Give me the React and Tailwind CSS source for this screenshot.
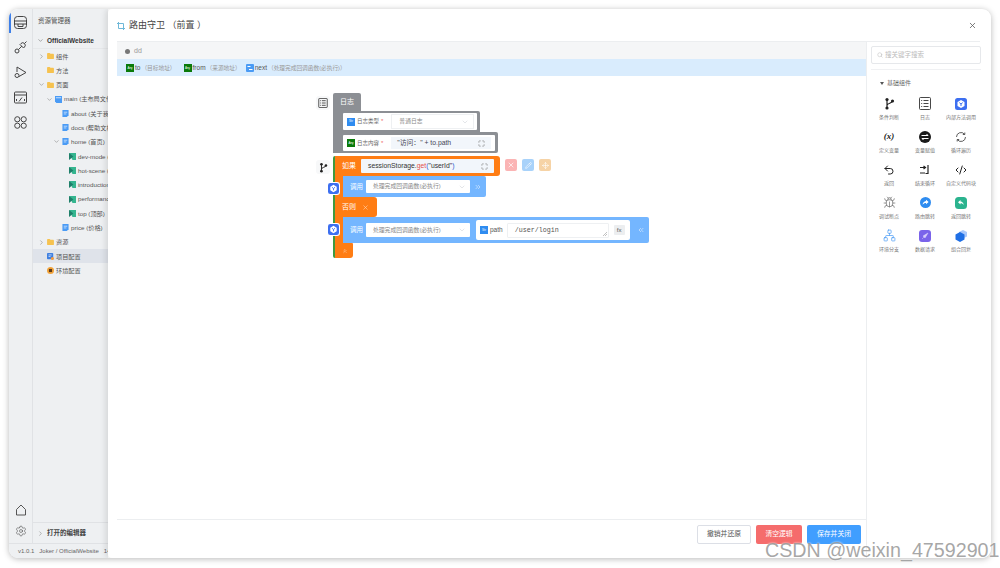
import React from "react";
import { ChevronRight, ChevronDown, Settings, X, Search, Maximize, Undo2, Code2, Bug, Network, ChevronsRight, ChevronsLeft, ChevronsUp, Pencil, Move } from "lucide-react";

const Folder = () => (
  <svg width="7" height="6" viewBox="0 0 8 7" className="shrink-0"><path d="M0 1a1 1 0 0 1 1-1h2l1 1h3a1 1 0 0 1 1 1v4a1 1 0 0 1-1 1H1a1 1 0 0 1-1-1z" fill="#f6c24f" /></svg>
);
const Page = ({ c = "#4a9bf5" }) => (
  <svg width="7" height="7" viewBox="0 0 7 8" className="shrink-0"><path d="M0 0h7v6L5 8H0z" fill={c} /><path d="M1.5 2.5h4M1.5 4.5h3" stroke="#fff" strokeWidth=".7" /></svg>
);
const Arrow = () => (
  <svg width="7" height="7" viewBox="0 0 8 8" className="shrink-0"><path d="M0 0h8v8H4z" fill="#35b58f" /><path d="M0 0l5 4-5 4z" fill="#1f7f6a" /></svg>
);
const MainIc = () => (
  <svg width="7" height="7" viewBox="0 0 8 8" className="shrink-0"><path d="M0 0h8v8H1.5L0 6z" fill="#4a9bf5" /><path d="M1 2h6" stroke="#fff" strokeWidth=".8" /></svg>
);
const Cfg = () => (
  <svg width="7" height="7" viewBox="0 0 9 9" className="shrink-0"><rect width="8" height="8" rx="1" fill="#3f7fe0" /><path d="M2 2.5h4M2 4.5h2.5" stroke="#fff" strokeWidth=".8" /><circle cx="7" cy="7" r="2" fill="#f59a3c" /></svg>
);
const Env = () => (
  <svg width="7" height="7" viewBox="0 0 9 9" className="shrink-0"><circle cx="4.5" cy="4.5" r="4.5" fill="#f2a33a" /><rect x="2.5" y="2.5" width="4" height="4" fill="#5b3a1a" /></svg>
);

const tree = [
  [0, "r", <Folder />, "组件"],
  [0, "", <Folder />, "方法"],
  [0, "d", <Folder />, "页面"],
  [1, "d", <MainIc />, "main (主布局文件)"],
  [2, "", <Page />, "about (关于我们)"],
  [2, "", <Page />, "docs (帮助文档)"],
  [2, "d", <Page />, "home (首页)"],
  [3, "", <Arrow />, "dev-mode (开发模式)"],
  [3, "", <Arrow />, "hot-scene (热门场景)"],
  [3, "", <Arrow />, "introduction (介绍)"],
  [3, "", <Arrow />, "performance (性能)"],
  [3, "", <Arrow />, "top (顶部)"],
  [2, "", <Page />, "price (价格)"],
  [0, "r", <Folder />, "资源"],
  [0, "", <Cfg />, "项目配置", true],
  [0, "", <Env />, "环境配置"],
];

const indent = ["pl-[4px]", "pl-[12px]", "pl-[19px]", "pl-[26px]"];

const Tag = ({ c = "bg-[#0a7a0a]", t = "Any" }) => (
  <span className={`inline-flex items-center justify-center w-[8px] h-[8px] shrink-0 text-[3px] text-white ${c}`}>{t}</span>
);

const Shield = ({ size = 11 }) => (
  <svg width={size} height={size} viewBox="0 0 12 12" className="block"><rect width="12" height="12" rx="2.5" fill="#3d6ff0" /><path d="M6 2l3.5 2v4L6 10 2.5 8V4z" fill="#fff" /><path d="M4.3 4.6L6 6l1.7-1.4M6 6v2" stroke="#3d6ff0" strokeWidth="1" fill="none" /></svg>
);

const palette = [
  ["条件判断", <svg width="11" height="13" viewBox="0 0 11 13"><circle cx="3" cy="2.5" r="1.6" fill="#222" /><circle cx="3" cy="11" r="1.6" fill="#222" /><circle cx="8.5" cy="4" r="1.6" fill="#222" /><path d="M3 2.5v8.5M8.5 4c0 2.5-5.5 2-5.5 4.5" stroke="#222" strokeWidth="1.2" fill="none" /></svg>],
  ["日志", <svg width="12" height="13" viewBox="0 0 12 13" fill="none" stroke="#333" strokeWidth=".9"><rect x=".5" y=".5" width="11" height="12" rx="1" /><path d="M4.5 3.5h5M4.5 6.5h5M4.5 9.5h5M2.2 3.5h1M2.2 6.5h1M2.2 9.5h1" /></svg>],
  ["内部方法调用", <Shield size={12} />],
  ["定义变量", <span className="text-[9px] font-bold text-[#222] leading-none font-['Liberation_Serif',serif] italic">(x)</span>],
  ["变量赋值", <svg width="12" height="12" viewBox="0 0 12 12"><circle cx="6" cy="6" r="6" fill="#1a1a1a" /><path d="M2.5 4.5h6.5l-1.5-1.5M9.5 7.5H3l1.500 1.500" stroke="#fff" strokeWidth="1" fill="none" /></svg>],
  ["循环遍历", <svg width="12" height="12" viewBox="0 0 12 12" fill="none" stroke="#333" strokeWidth=".8"><path d="M1.5 6a4.5 4.5 0 0 1 8-2.8M10.5 6a4.5 4.5 0 0 1-8 2.8" /><path d="M9.8 1.5v2H7.8M2.2 10.5v-2h2" /></svg>],
  ["返回", <Undo2 size={12} color="#222" strokeWidth={2} />],
  ["结束循环", <svg width="12" height="11" viewBox="0 0 12 11" fill="none" stroke="#222" strokeWidth="1.2"><path d="M1 3.5h5M6 9H1M9 1v8.500H6.500" /><path d="M4.500 2l2 1.500-2 1.500" /></svg>],
  ["自定义代码块", <Code2 size={12} color="#222" strokeWidth={2} />],
  ["调试断点", <Bug size={13} color="#555" strokeWidth={1.1} />],
  ["路由跳转", <svg width="11" height="11" viewBox="0 0 11 11"><circle cx="5.5" cy="5.5" r="5.5" fill="#2f8cf0" /><path d="M6 2.7l2.6 2.3L6 7.3V6C4.5 6 3.4 6.5 2.6 7.8 2.8 5.6 4 4.3 6 4z" fill="#fff" /></svg>],
  ["返回跳转", <svg width="12" height="12" viewBox="0 0 12 12"><rect width="12" height="12" rx="3.5" fill="#2bb38e" /><path d="M5.5 3L3 5.3l2.5 2.3V6.3C7 6.3 8 6.8 8.8 8 8.6 6 7.5 4.6 5.5 4.4z" fill="#fff" /></svg>],
  ["环境分支", <Network size={13} color="#4a9bf5" strokeWidth={1.3} />],
  ["数据请求", <svg width="12" height="12" viewBox="0 0 12 12"><rect width="12" height="12" rx="3" fill="#7a63ea" /><path d="M3 9l2-2M4 6l2 2 3-5-5 3z" fill="#d8cffb" stroke="#d8cffb" strokeWidth=".5" /></svg>],
  ["组合回复", <svg width="13" height="12" viewBox="0 0 13 12"><path d="M8 0l4 2v4.500l-4 2-4-2V2z" fill="#a9c8fb" /><path d="M5 2l4.500 2.500v5L5 12 .5 9.500v-5z" fill="#1f6fe5" /></svg>],
];

const Sel = ({ w = "w-[104px]", h = "h-[13px]", children }) => (
  <div className={`flex items-center justify-between bg-white rounded-[1px] pl-[7px] pr-[4px] ${w} ${h}`}>
    <span className="text-[5.8px] text-[#888] whitespace-nowrap">{children}</span>
    <ChevronDown size={8} color="#c0c4cc" strokeWidth={1.3} />
  </div>
);

export default function App() {
  return (
    <div className="relative w-[1000px] h-[568px] overflow-hidden bg-white font-['Liberation_Sans','Noto_Sans_CJK_SC',sans-serif] p-[9px] pb-[10px]">
      <div className="flex h-full rounded-[9px] overflow-hidden shadow-[0_1px_6px_rgba(0,0,0,0.28)]">
        {/* Left column */}
        <div className="w-[99px] shrink-0 flex flex-col bg-[#eef0f2]">
          <div className="flex-1 flex min-h-0">
            <div className="w-[24px] shrink-0 flex flex-col items-center border-r border-[#e0e2e5] relative pt-[7px] pb-[6px] text-[#333]">
              <div className="absolute left-0 top-[4px] w-[1.5px] h-[20px] bg-[#3d7fe8]" />
              <div className="flex flex-col items-center gap-[12px]">
                <svg width="13" height="13" viewBox="0 0 13 13" fill="none" stroke="#444" strokeWidth="1"><rect x=".5" y=".5" width="12" height="12" rx="3" /><path d="M.5 5h12M.5 8h12" /><path d="M4 8v2.500h5V8" /></svg>
                <svg width="13" height="13" viewBox="0 0 13 13" fill="none" stroke="#444" strokeWidth="1"><circle cx="3" cy="10" r="2" /><path d="M4.500 8.500L8 5M6 3.500l3.500 3.500 1-1a2.400 2.400 0 0 0-3.500-3.500zM10.500 2.500l2-2" /></svg>
                <svg width="13" height="13" viewBox="0 0 13 13" fill="none" stroke="#444" strokeWidth="1"><path d="M3 1l9 5.500L5 10.500M3 1v5" /><circle cx="3" cy="9.500" r="2" /></svg>
                <svg width="13" height="13" viewBox="0 0 13 13" fill="none" stroke="#444" strokeWidth="1"><rect x=".5" y="1" width="12" height="11" rx="1" /><path d="M.5 4h12M3 8L2 9l1 1M10 8l1 1-1 1M5 10.500l3-4" /></svg>
                <svg width="13" height="13" viewBox="0 0 13 13" fill="none" stroke="#444" strokeWidth="1"><circle cx="3.300" cy="3.300" r="2.600" /><circle cx="9.700" cy="3.300" r="2.600" /><circle cx="3.300" cy="9.700" r="2.600" /><circle cx="9.700" cy="9.700" r="2.600" /></svg>
              </div>
              <div className="mt-auto flex flex-col items-center gap-[9px]">
                <svg width="12" height="12" viewBox="0 0 12 12" fill="none" stroke="#444" strokeWidth=".9"><path d="M1.500 5.500L6 1l4.500 4.500v5.500h-9z" /></svg>
                <Settings size={12} color="#444" strokeWidth={1.1} />
              </div>
            </div>
            <div className="flex-1 min-w-0 flex flex-col overflow-hidden">
              <div className="h-[22px] shrink-0 flex items-center pl-[5px] pt-[1px] text-[6.5px] text-[#555] whitespace-nowrap">资源管理器</div>
              <div className="h-[16px] shrink-0 flex items-center pl-[4px] gap-[3px] pt-[3px]">
                <ChevronDown size={7} color="#777" />
                <span className="text-[6.5px] font-bold text-[#333] whitespace-nowrap">OfficialWebsite</span>
              </div>
              <div className="mt-[1px] border-t border-[#e6e8ea] flex flex-col">
                {tree.map(([lv, ch, ic, label, active], i) => (
                  <div key={i} className={`h-[14.3px] flex items-center gap-[2px] whitespace-nowrap ${indent[lv]} ${active ? "bg-[#dfe3ea]" : ""}`}>
                    <span className="w-[8px] shrink-0 flex justify-center">
                      {ch === "r" && <ChevronRight size={7} color="#888" />}
                      {ch === "d" && <ChevronDown size={7} color="#888" />}
                    </span>
                    {ic}
                    <span className="text-[6.2px] text-[#555]">{label}</span>
                  </div>
                ))}
              </div>
              <div className="mt-auto h-[21px] border-t border-[#e0e2e5] flex items-center pl-[4px] gap-[3px] whitespace-nowrap">
                <ChevronRight size={7} color="#888" />
                <span className="text-[6.5px] font-bold text-[#444]">打开的编辑器</span>
              </div>
            </div>
          </div>
          <div className="h-[15px] shrink-0 border-t border-[#e0e2e5] flex items-center pl-[9px] gap-[5px] text-[6px] text-[#666] whitespace-nowrap overflow-hidden">
            <span>v1.0.1</span><span>Joker / OfficialWebsite</span><span>14</span>
          </div>
        </div>

        {/* Modal */}
        <div className="flex-1 min-w-0 flex flex-col bg-white rounded-[4px] shadow-[-2px_0_6px_rgba(0,0,0,0.12)] z-10">
          <div className="h-[33px] shrink-0 ml-[9px] mr-[11px] pt-[1px] flex items-center justify-between border-b border-[#eceef0]">
            <div className="flex items-center gap-[4px]">
              <svg width="8" height="8" viewBox="0 0 8 8" fill="none" stroke="#6fb8d8" strokeWidth="1"><path d="M1.500 0v6.500H8M0 1.500h6.500V8" /></svg>
              <span className="text-[9px] text-[#444] whitespace-nowrap">路由守卫 （前置 ）</span>
            </div>
            <X size={9} color="#555" className="mr-[3px]" />
          </div>

          <div className="flex-1 min-h-0 flex pl-[9px]">
            <div className="w-[749px] shrink-0 flex flex-col">
              <div className="h-[17px] shrink-0 bg-[#f5f6f7] flex items-center pl-[8px] pt-[1px] gap-[4px] text-[7px] text-[#999]">
                <span className="w-[5px] h-[5px] rounded-full bg-[#777]" />dd
              </div>
              <div className="h-[17px] shrink-0 bg-[#d9ecfd] flex items-center pl-[9px] pt-[1px] gap-[1px] text-[6.5px] text-[#555] whitespace-nowrap">
                <Tag /><span>to</span><span className="text-[#999] text-[5.7px]">（目标地址）</span>
                <span className="w-[6px]" /><Tag /><span>from</span><span className="text-[#999] text-[5.7px]">（来源地址）</span>
                <span className="w-[3px]" />
                <svg width="8" height="8" viewBox="0 0 8 8"><rect width="8" height="8" rx="1" fill="#4a9bf5" /><path d="M1.500 2.500h3M3 5.500h3.500" stroke="#fff" /></svg>
                <span>next</span><span className="text-[#999] text-[5.7px]">（处理完成回调函数(必执行)）</span>
              </div>

              {/* Canvas */}
              <div className="flex-1 min-h-0 relative">
                <div className="absolute left-[216px] top-[17px] flex flex-col text-[6.5px]">
                  {/* Log block */}
                  <div className="relative flex flex-col">
                    <div className="absolute left-[-17px] top-[3px] w-[14px] h-[14px] rounded-[3px] bg-[#f7f8f9] flex items-center justify-center">
                      <svg width="10" height="10" viewBox="0 0 12 13" fill="none" stroke="#222" strokeWidth="1"><rect x=".5" y=".5" width="11" height="12" rx="1" /><path d="M4.500 3.500h5M4.500 6.500h5M4.500 9.500h5M2.200 3.500h1M2.200 6.500h1M2.200 9.500h1" /></svg>
                    </div>
                    <div className="w-[28px] h-[18px] bg-[#8c8f94] rounded-t-[2px] flex items-center pl-[7px] text-[7px] text-white">日志</div>
                    <div className="flex">
                      <div className="w-[8px] bg-[#8c8f94]" />
                      <div className="flex flex-col">
                        <div className="w-[139px] h-[21px] bg-[#8c8f94] rounded-tr-[2px] pl-[2px] pt-[2px] pr-[3px]">
                          <div className="h-[17px] bg-white rounded-[1px] flex items-center pl-[4px] gap-[2px] whitespace-nowrap">
                            <Tag c="bg-[#2f8cf0]" t="Str" />
                            <span className="text-[5.5px] text-[#666]">日志类型</span><span className="text-[#e66] text-[6px]">*</span>
                            <div className="ml-[6px] border border-[#eef0f2]"><Sel w="w-[81px]">普通日志</Sel></div>
                          </div>
                        </div>
                        <div className="w-[157px] h-[21px] bg-[#8c8f94] rounded-r-[2px] pl-[2px] pt-[3px] pb-[2px] pr-[3px]">
                          <div className="h-full bg-white rounded-[1px] flex items-center pl-[4px] gap-[2px] whitespace-nowrap">
                            <Tag />
                            <span className="text-[5.5px] text-[#666]">日志内容</span><span className="text-[#e66] text-[6px]">*</span>
                            <div className="ml-[6px] w-[100px] h-[12px] bg-[#f2f6fb] flex items-center justify-between px-[6px] text-[6.8px] text-[#445] whitespace-nowrap">
                              <span>"访问：" + to.path</span><Maximize size={7} color="#777" />
                            </div>
                          </div>
                        </div>
                      </div>
                    </div>
                  </div>

                  {/* If block */}
                  <div className="relative flex flex-col mt-[3px] border-l-[2px] border-[#3f9a3f] rounded-l-[2px]">
                    <div className="absolute left-[-19px] top-[4px] w-[14px] h-[14px] rounded-[3px] bg-[#f7f8f9] flex items-center justify-center">
                      <svg width="9" height="11" viewBox="0 0 11 13"><circle cx="3" cy="2.500" r="1.600" fill="#222" /><circle cx="3" cy="11" r="1.600" fill="#222" /><circle cx="8.500" cy="4" r="1.600" fill="#222" /><path d="M3 2.500v8.500M8.500 4c0 2.500-5.500 2-5.500 4.500" stroke="#222" strokeWidth="1.200" fill="none" /></svg>
                    </div>
                    <div className="relative w-[165px] h-[20px] bg-[#ff7d14] rounded-r-[3px] flex items-center pl-[7px] text-white text-[7px]">
                      <span className="w-[19px] shrink-0">如果</span>
                      <div className="w-[133px] h-[14px] bg-[#f2f6fb] flex items-center justify-between pl-[7px] pr-[6px] text-[6.8px] text-[#333] whitespace-nowrap rounded-[1px]">
                        <span>sessionStorage.<span className="text-[#e2504a]">get</span><span className="text-[#2a5ad0]">(</span>"userId"<span className="text-[#2a5ad0]">)</span></span>
                        <Maximize size={7} color="#777" />
                      </div>
                      <div className="absolute left-[170px] top-[3px] flex gap-[5px]">
                        <span className="w-[12px] h-[12px] rounded-[2px] bg-[#fbb4b4] flex items-center justify-center"><X size={8} color="#fff" /></span>
                        <span className="w-[12px] h-[12px] rounded-[2px] bg-[#a8d2fa] flex items-center justify-center"><Pencil size={7} color="#fff" /></span>
                        <span className="w-[12px] h-[12px] rounded-[2px] bg-[#f6d3a6] flex items-center justify-center"><Move size={7} color="#fff" /></span>
                      </div>
                    </div>
                    <div className="flex">
                      <div className="w-[8px] bg-[#ff7d14]" />
                      <div className="relative w-[143px] h-[21px] bg-[#74b6ff] rounded-r-[2px] flex items-center pl-[7px] text-white text-[6.5px]">
                        <div className="absolute left-[-16px] top-[6px] p-[1px] bg-white rounded-[3px]"><Shield /></div>
                        <span className="w-[16px]">调用</span>
                        <Sel>处理完成回调函数(必执行)</Sel>
                        <ChevronsRight size={8} color="#d9ecff" className="ml-[4px]" />
                      </div>
                    </div>
                    <div className="w-[42px] h-[20px] bg-[#ff7d14] rounded-r-[3px] flex items-center pl-[7px] gap-[6px] text-white text-[7px] whitespace-nowrap">
                      否则 <X size={7} color="#ffd9b8" />
                    </div>
                    <div className="flex">
                      <div className="w-[8px] bg-[#ff7d14]" />
                      <div className="relative w-[306px] h-[26px] bg-[#74b6ff] rounded-r-[2px] flex items-center pl-[7px] text-white text-[6.5px]">
                        <div className="absolute left-[-16px] top-[6px] p-[1px] bg-white rounded-[3px]"><Shield /></div>
                        <span className="w-[16px]">调用</span>
                        <Sel h="h-[14px]">处理完成回调函数(必执行)</Sel>
                        <div className="ml-[6px] w-[154px] h-[20px] bg-white rounded-[2px] flex items-center pl-[4px] gap-[2px]">
                          <Tag c="bg-[#2f8cf0]" t="Str" />
                          <span className="text-[6.5px] text-[#555]">path</span>
                          <div className="relative ml-[2px] w-[102px] h-[15px] border border-[#eef0f2] rounded-[1px] flex items-center pl-[7px] font-['Liberation_Mono',monospace] text-[6.7px] text-[#555]">
                            /user/login
                            <svg className="absolute right-[1px] bottom-[1px]" width="4" height="4" viewBox="0 0 4 4" stroke="#999" strokeWidth=".6"><path d="M0 4l4-4M2 4l2-2" /></svg>
                          </div>
                          <span className="ml-[3px] w-[11px] h-[10px] bg-[#eceef0] rounded-[1px] flex items-center justify-center text-[6px] text-[#555]">fx</span>
                        </div>
                        <ChevronsLeft size={8} color="#d9ecff" className="ml-[7px]" />
                      </div>
                    </div>
                    <div className="w-[18px] h-[15px] bg-[#ff7d14] rounded-br-[3px] rounded-tr-[1px] flex items-center pl-[7px]">
                      <ChevronsUp size={6} color="#ffe3c9" />
                    </div>
                  </div>
                </div>
              </div>

              <div className="h-[39px] shrink-0 border-t border-[#eceef0] flex items-start pt-[5px] justify-end pr-[5px] gap-[5px] text-[6.8px] whitespace-nowrap">
                <button className="w-[54px] h-[19px] bg-white border border-[#dcdfe6] rounded-[2px] text-[#555]">撤销并还原</button>
                <button className="w-[46px] h-[19px] bg-[#f56c6c] rounded-[2px] text-white">清空逻辑</button>
                <button className="w-[54px] h-[19px] bg-[#409eff] rounded-[2px] text-white">保存并关闭</button>
              </div>
            </div>

            {/* Palette */}
            <div className="flex-1 min-w-0 border-l border-[#eceef0] flex flex-col pl-[4px] pr-[10px]">
              <div className="h-[28px] shrink-0 pt-[4px] border-b border-[#f0f1f3]">
                <div className="w-full h-[18px] border border-[#e6e8eb] rounded-[2px] flex items-center pl-[5px] gap-[2px] text-[6.5px] text-[#bbb] whitespace-nowrap">
                  <Search size={6} color="#bbb" />搜关键字搜索
                </div>
              </div>
              <div className="flex items-center gap-[3px] pl-[9px] mt-[8px] h-[10px] text-[6px] text-[#666]">
                <span className="w-0 h-0 border-x-[2px] border-x-transparent border-t-[3px] border-t-[#555]" />基础组件
              </div>
              <div className="grid grid-cols-3 w-[108px] mt-[8px]">
                {palette.map(([label, ic]) => (
                  <div key={label} className="h-[33px] flex flex-col items-center">
                    <div className="h-[15px] flex items-center justify-center">{ic}</div>
                    <div className="mt-[3px] text-[5px] text-[#777] whitespace-nowrap">{label}</div>
                  </div>
                ))}
              </div>
            </div>
          </div>
        </div>
      </div>
      <div className="absolute z-20 left-[765px] top-[538px] text-[19.7px] leading-[24px] text-[#8f8f8f]/80 whitespace-nowrap [text-shadow:0_0_2px_#fff]">CSDN @weixin_47592901</div>
    </div>
  );
}
